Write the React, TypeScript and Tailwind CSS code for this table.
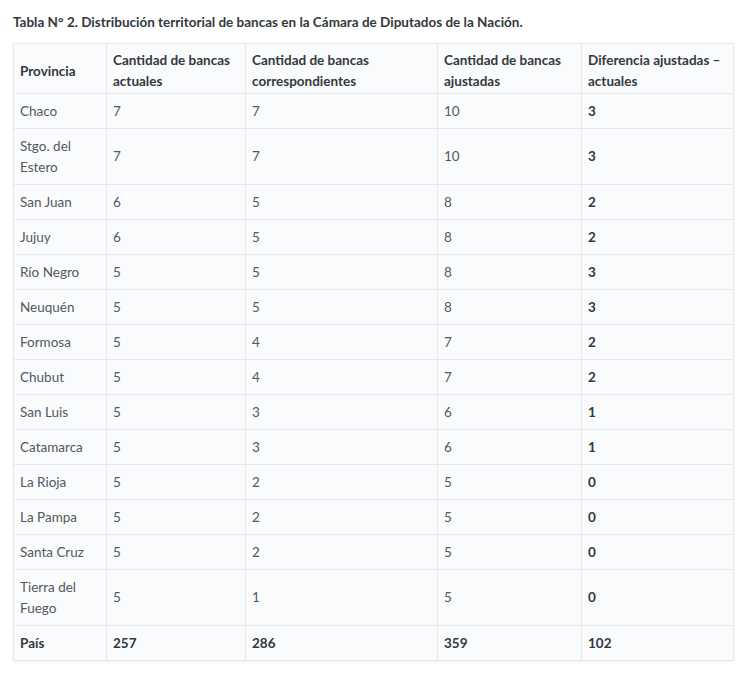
const rows: [string, number, number, number, number][] = [
  ["Chaco", 7, 7, 10, 3],
  ["Stgo. del Estero", 7, 7, 10, 3],
  ["San Juan", 6, 5, 8, 2],
  ["Jujuy", 6, 5, 8, 2],
  ["Río Negro", 5, 5, 8, 3],
  ["Neuquén", 5, 5, 8, 3],
  ["Formosa", 5, 4, 7, 2],
  ["Chubut", 5, 4, 7, 2],
  ["San Luis", 5, 3, 6, 1],
  ["Catamarca", 5, 3, 6, 1],
  ["La Rioja", 5, 2, 5, 0],
  ["La Pampa", 5, 2, 5, 0],
  ["Santa Cruz", 5, 2, 5, 0],
  ["Tierra del Fuego", 5, 1, 5, 0],
];

const cell = "border border-[#e6e8eb] px-[6px] py-[6.5px] align-middle";
const head = "border border-[#e6e8eb] px-[6px] pt-[6px] pb-[1px] align-middle";

export default function App() {
  return (
    <div className="min-h-screen bg-white px-[13px] pt-[12px] text-[13.5px] leading-[21px] text-[#53585e] font-['Lato',sans-serif]">
      <p className="mb-[10px] font-bold text-[#33383e]">
        Tabla N° 2. Distribución territorial de bancas en la Cámara de Diputados de la Nación.
      </p>
      <table className="w-[720px] table-fixed border-collapse bg-[#fafbfc] shadow-[0_1px_3px_rgba(0,0,0,0.06)]">
        <colgroup>
          <col className="w-[93px]" />
          <col className="w-[139px]" />
          <col className="w-[192px]" />
          <col className="w-[144px]" />
          <col className="w-[152px]" />
        </colgroup>
        <thead>
          <tr className="font-bold text-[#33383e] text-left">
            <th className={head}>Provincia</th>
            <th className={head}>Cantidad de bancas actuales</th>
            <th className={head}>Cantidad de bancas correspondientes</th>
            <th className={head}>Cantidad de bancas ajustadas</th>
            <th className={head}>Diferencia ajustadas – actuales</th>
          </tr>
        </thead>
        <tbody>
          {rows.map((r) => (
            <tr key={r[0]}>
              <td className={cell}>{r[0]}</td>
              <td className={cell}>{r[1]}</td>
              <td className={cell}>{r[2]}</td>
              <td className={cell}>{r[3]}</td>
              <td className={`${cell} font-bold text-[#33383e]`}>{r[4]}</td>
            </tr>
          ))}
          <tr className="font-bold text-[#33383e]">
            <td className={cell}>País</td>
            <td className={cell}>257</td>
            <td className={cell}>286</td>
            <td className={cell}>359</td>
            <td className={cell}>102</td>
          </tr>
        </tbody>
      </table>
    </div>
  );
}
